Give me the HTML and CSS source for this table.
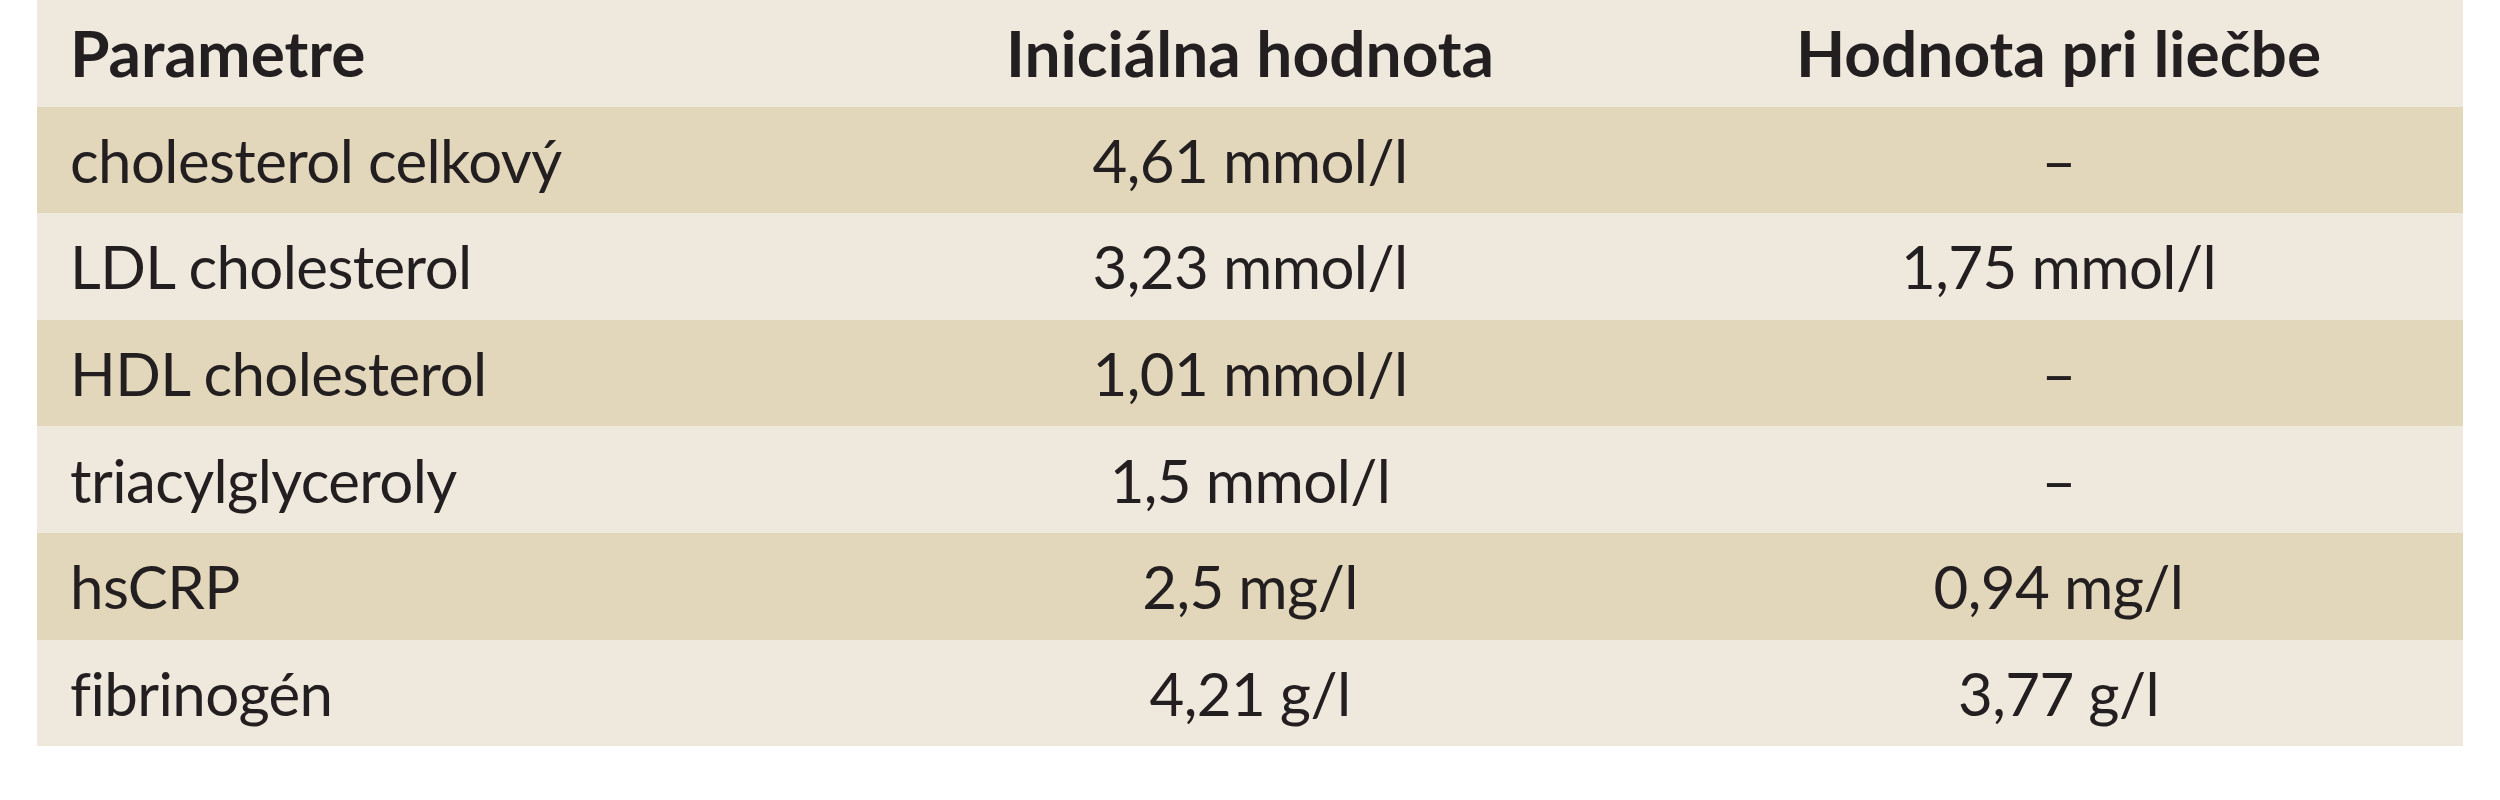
FILE: index.html
```html
<!DOCTYPE html>
<html lang="sk">
<head>
<meta charset="utf-8">
<title>Parametre</title>
<link rel="stylesheet" href="styles.css">
</head>
<body>
<table class="lab">
  <thead>
    <tr class="row-light">
      <th class="c1">Parametre</th>
      <th class="c2">Iniciálna hodnota</th>
      <th class="c3">Hodnota pri liečbe</th>
    </tr>
  </thead>
  <tbody>
    <tr class="row-dark"><td class="c1">cholesterol celkový</td><td class="c2">4,61 mmol/l</td><td class="c3">–</td></tr>
    <tr class="row-light"><td class="c1">LDL cholesterol</td><td class="c2">3,23 mmol/l</td><td class="c3">1,75 mmol/l</td></tr>
    <tr class="row-dark"><td class="c1">HDL cholesterol</td><td class="c2">1,01 mmol/l</td><td class="c3">–</td></tr>
    <tr class="row-light"><td class="c1">triacylglyceroly</td><td class="c2">1,5 mmol/l</td><td class="c3">–</td></tr>
    <tr class="row-dark"><td class="c1">hsCRP</td><td class="c2">2,5 mg/l</td><td class="c3">0,94 mg/l</td></tr>
    <tr class="row-light"><td class="c1">fibrinogén</td><td class="c2">4,21 g/l</td><td class="c3">3,77 g/l</td></tr>
  </tbody>
</table>
</body>
</html>
```
FILE: styles.css
```css
html, body {
  margin: 0;
  padding: 0;
  background: #ffffff;
}
body {
  padding-left: 37px;
  font-family: Lato, "Open Sans", sans-serif;
  color: #231f20;
}
.lab {
  width: 2426px;
  border-collapse: collapse;
  table-layout: fixed;
}
.lab th, .lab td {
  height: 106.6px;
  padding: 0;
  line-height: 1;
  vertical-align: middle;
}
.lab th {
  font-weight: 700;
  font-size: 64px;
}
.lab td {
  font-weight: 400;
  font-size: 60px;
  letter-spacing: -0.6px;
}
.row-light { background: #efe9dd; }
.row-dark { background: #e2d7ba; }
.lab .c1 { width: 776px; text-align: left; padding-left: 33px; }
.lab .c2 { width: 808px; text-align: center; }
.lab .c3 { text-align: center; }
```
